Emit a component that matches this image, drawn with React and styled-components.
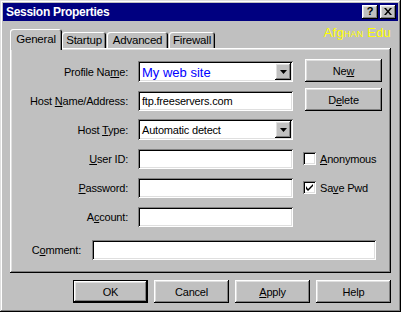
import React from 'react'
import styled, { createGlobalStyle, css } from 'styled-components'

const GlobalStyle = createGlobalStyle`
  html, body { margin: 0; padding: 0; background: #c0c0c0; }
  body { font-family: "Liberation Sans", Arial, sans-serif; }
  * { box-sizing: border-box; }
`

const raised = css`
  background: #c0c0c0;
  box-shadow: inset -1px -1px #000, inset 1px 1px #fff, inset -2px -2px #808080, inset 2px 2px #dfdfdf;
`
const sunken = css`
  background: #fff;
  box-shadow: inset 1px 1px #808080, inset -1px -1px #fff, inset 2px 2px #000, inset -2px -2px #dfdfdf;
`

const Window = styled.div`
  width: 401px;
  height: 312px;
  padding: 3px;
  display: flex;
  flex-direction: column;
  background: #c0c0c0;
  box-shadow: inset -1px -1px #000, inset 1px 1px #dfdfdf, inset -2px -2px #808080, inset 2px 2px #fff;
  font-size: 11px;
  letter-spacing: -0.2px;
  color: #000;
`

const TitleBar = styled.div`
  height: 18px;
  background: #000080;
  display: flex;
  align-items: center;
  padding: 0 2px 0 3px;
  gap: 2px;
`

const TitleText = styled.span`
  flex: 1;
  color: #fff;
  font-weight: bold;
  font-size: 12px;
  letter-spacing: -0.3px;
`

const TitleButton = styled.div`
  ${raised};
  width: 16px;
  height: 14px;
  display: flex;
  align-items: center;
  justify-content: center;
  font-weight: bold;
  font-size: 11px;
  line-height: 1;
  padding: 0 0 1px 0;
`

const Body = styled.div`
  flex: 1;
  display: flex;
  flex-direction: column;
  padding: 8px 7px 0 7px;
`

const TabRow = styled.div`
  display: flex;
  align-items: flex-end;
  height: 19px;
  position: relative;
  z-index: 1;
`

const Tab = styled.div`
  width: ${p => p.$w}px;
  height: ${p => (p.$active ? 21 : 16)}px;
  margin-bottom: ${p => (p.$active ? -2 : 0)}px;
  margin-right: ${p => (p.$active ? 0 : 1)}px;
  background: #c0c0c0;
  border-radius: 3px 3px 0 0;
  box-shadow: inset 1px 1px #fff, inset -1px 0 #000, inset -2px 0 #808080;
  display: flex;
  justify-content: center;
  padding-top: ${p => (p.$active ? 4 : 2)}px;
  font-size: 11.5px;
`

const Brand = styled.div`
  margin-left: auto;
  align-self: flex-start;
  margin-top: -4px;
  color: #ffff00;
  font-size: 13px;
  letter-spacing: 0.2px;
`

const Caps = styled.span`
  font-variant: small-caps;
`

const Panel = styled.div`
  height: 225px;
  background: #c0c0c0;
  box-shadow: inset -1px -1px #000, inset 1px 1px #fff, inset -2px -2px #808080, inset 2px 2px #dfdfdf;
  padding: 13px 0 0 2px;
  display: flex;
  flex-direction: column;
`

const FormGrid = styled.div`
  display: grid;
  grid-template-columns: 116px 155px 79px;
  grid-auto-rows: 21px;
  column-gap: 10px;
  row-gap: 8px;
  align-items: center;
`

const Label = styled.label`
  text-align: right;
  white-space: nowrap;
`

const Field = styled.div`
  ${sunken};
  height: ${p => (p.$combo ? 21 : 20)}px;
  width: ${p => p.$w || 155}px;
  display: flex;
  align-items: center;
  padding: 0 2px 0 4px;
  color: ${p => p.$color || '#000'};
  font-size: ${p => p.$size || 11}px;
  letter-spacing: ${p => (p.$size ? 0 : -0.2)}px;
  white-space: nowrap;
`

const FieldText = styled.span`
  flex: 1;
  padding-top: 1px;
`

const DropButton = styled.div`
  ${raised};
  width: 16px;
  height: 17px;
  display: flex;
  align-items: center;
  justify-content: center;
`

const Button = styled.div`
  ${raised};
  width: ${p => p.$w || 75}px;
  height: 23px;
  display: flex;
  align-items: center;
  justify-content: center;
  ${p => p.$default && css`
    box-shadow: inset 0 0 0 1px #000, inset -2px -2px #000, inset 2px 2px #fff, inset -3px -3px #808080, inset 3px 3px #dfdfdf;
  `}
`

const GridButton = styled(Button)`
  justify-self: end;
  margin-top: -2px;
`

const Check = styled.div`
  display: flex;
  align-items: center;
  gap: 4px;
`

const CheckBox = styled.div`
  ${sunken};
  width: 13px;
  height: 13px;
  display: flex;
  align-items: center;
  justify-content: center;
`

const CommentRow = styled.div`
  display: grid;
  grid-template-columns: 69px 284px;
  column-gap: 11px;
  align-items: center;
  margin-top: 13px;
`

const ButtonBar = styled.div`
  display: flex;
  justify-content: flex-end;
  gap: 6px;
  margin-top: 7px;
`

const Arrow = () => (
  <svg width="7" height="4" viewBox="0 0 7 4">
    <path d="M0 0h7L3.5 4z" fill="#000" />
  </svg>
)

const Combo = ({ children, color, size }) => (
  <Field $combo $color={color} $size={size}>
    <FieldText>{children}</FieldText>
    <DropButton><Arrow /></DropButton>
  </Field>
)

const CheckMark = () => (
  <svg width="7" height="7" viewBox="0 0 7 7">
    <path d="M0 2v3l2 2l5-5v-2l-5 5z" fill="#000" />
  </svg>
)

export default function App() {
  return (
    <>
      <GlobalStyle />
      <Window>
        <TitleBar>
          <TitleText>Session Properties</TitleText>
          <TitleButton>?</TitleButton>
          <TitleButton>
            <svg width="8" height="7" viewBox="0 0 8 7">
              <path d="M0 0h2l2 2.5l2-2.5h2l-3 3.5l3 3.5h-2l-2-2.5l-2 2.5h-2l3-3.5z" fill="#000" />
            </svg>
          </TitleButton>
        </TitleBar>
        <Body>
          <TabRow>
            <Tab $active $w={52}>General</Tab>
            <Tab $w={44}>Startup</Tab>
            <Tab $w={61}>Advanced</Tab>
            <Tab $w={46}>Firewall</Tab>
            <Brand>Afg<Caps>han</Caps> Edu</Brand>
          </TabRow>
          <Panel>
            <FormGrid>
              <Label>Profile Na<u>m</u>e:</Label>
              <Combo color="#0000ff" size={13}>My web site</Combo>
              <GridButton $w={77}>Ne<u>w</u></GridButton>

              <Label>Host <u>N</u>ame/Address:</Label>
              <Field>ftp.freeservers.com</Field>
              <GridButton $w={77}>D<u>e</u>lete</GridButton>

              <Label>Host <u>T</u>ype:</Label>
              <Combo>Automatic detect</Combo>
              <span />

              <Label><u>U</u>ser ID:</Label>
              <Field />
              <Check>
                <CheckBox />
                <span><u>A</u>nonymous</span>
              </Check>

              <Label><u>P</u>assword:</Label>
              <Field />
              <Check>
                <CheckBox><CheckMark /></CheckBox>
                <span>Sa<u>v</u>e Pwd</span>
              </Check>

              <Label>A<u>c</u>count:</Label>
              <Field />
              <span />
            </FormGrid>
            <CommentRow>
              <Label>C<u>o</u>mment:</Label>
              <Field $w={284} />
            </CommentRow>
          </Panel>
          <ButtonBar>
            <Button $default>OK</Button>
            <Button>Cancel</Button>
            <Button><u>A</u>pply</Button>
            <Button>Help</Button>
          </ButtonBar>
        </Body>
      </Window>
    </>
  )
}
